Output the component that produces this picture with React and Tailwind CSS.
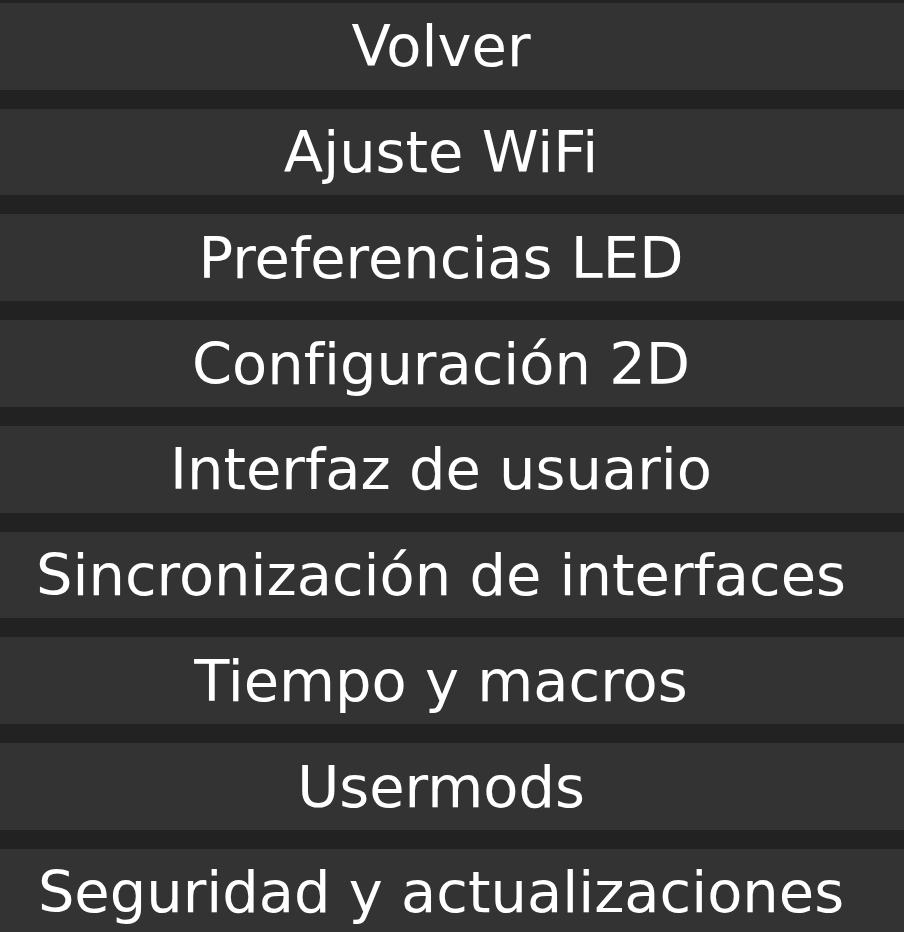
const items = [
  'Volver',
  'Ajuste WiFi',
  'Preferencias LED',
  'Configuración 2D',
  'Interfaz de usuario',
  'Sincronización de interfaces',
  'Tiempo y macros',
  'Usermods',
  'Seguridad y actualizaciones',
];

export default function App() {
  return (
    <div className="min-h-screen bg-[#222] pt-[2.75px] font-['DejaVu_Sans',Verdana,sans-serif]">
      <div className="flex flex-col gap-[19px]">
        {items.map((item) => (
          <button
            key={item}
            className="flex h-[86.75px] w-full shrink-0 items-center justify-center bg-[#333] pt-[2px] pr-[22px] text-[57.5px] leading-none whitespace-nowrap text-white [font-variant-ligatures:none]"
          >
            {item}
          </button>
        ))}
      </div>
    </div>
  );
}
